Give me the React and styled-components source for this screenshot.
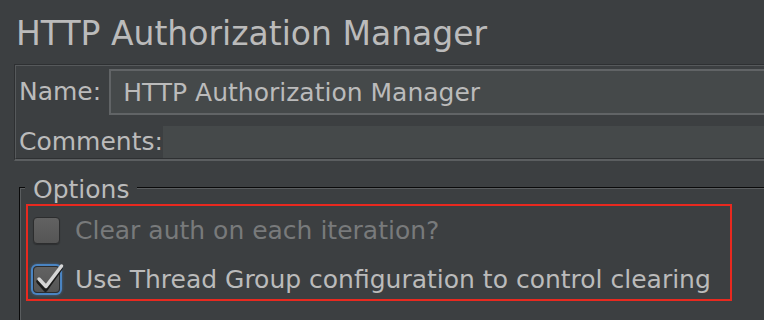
import React from "react";
import styled, { createGlobalStyle } from "styled-components";

const GlobalStyle = createGlobalStyle`
  html, body {
    margin: 0;
    padding: 0;
    background: #3c3f41;
    overflow: hidden;
  }
  body {
    font-family: "DejaVu Sans", "Liberation Sans", sans-serif;
    color: #bbbbbb;
  }
`;

const Page = styled.div`
  width: 764px;
  height: 320px;
  overflow: hidden;
`;

const Title = styled.h1`
  margin: 15px 0 0 16px;
  font-size: 33px;
  font-weight: normal;
  line-height: 38px;
  color: #bbbbbb;
  white-space: nowrap;
`;

const NamePanel = styled.div`
  margin: 11px -40px 0 14px;
  border-top: 1px solid #2e3032;
  border-left: 1px solid #2e3032;
  border-bottom: 2px solid #5b5e60;
`;

const PanelInner = styled.div`
  border-top: 1px solid #56595b;
  border-left: 1px solid #56595b;
  border-bottom: 1px solid #2e3032;
  padding: 3px 0 0 3px;
  display: flex;
  flex-direction: column;
  gap: 11px;
`;

const Row = styled.div`
  display: flex;
  align-items: center;
  height: ${(p) => p.$h}px;
`;

const Label = styled.span`
  font-size: 25px;
  line-height: 30px;
  color: #bbbbbb;
  white-space: nowrap;
  margin-right: ${(p) => p.$gap || 0}px;
`;

const TextField = styled.div`
  flex: 1;
  height: 100%;
  box-sizing: border-box;
  border: 2px solid #616466;
  background: #45494a;
  display: flex;
  align-items: center;
  padding-left: 12px;
  font-size: 25px;
  color: #bbbbbb;
  white-space: nowrap;
`;

const CommentField = styled.div`
  flex: 1;
  align-self: stretch;
  background: #45494a;
`;

const Options = styled.fieldset`
  margin: 10px -60px 0 19px;
  padding: 0 0 30px 4px;
  border: 2px groove #5a5d5f;
  border-right: none;
  border-bottom: none;
`;

const Legend = styled.legend`
  padding: 4px 8px 0;
  font-size: 25px;
  line-height: 29px;
  color: #bbbbbb;
`;

const Highlight = styled.div`
  margin-left: 1px;
  width: 706px;
  height: 97px;
  box-sizing: border-box;
  border: 2px solid #e8291f;
  padding: 10px 0 0 5px;
  display: flex;
  flex-direction: column;
  gap: 21px;
`;

const CheckRow = styled.label`
  display: flex;
  align-items: center;
  height: 28px;
  gap: 15px;
`;

const Box = styled.span`
  position: relative;
  flex: none;
  width: 27px;
  height: 27px;
  box-sizing: border-box;
  border-radius: 4px;
  border: 1px solid #2c2d2e;
  background: linear-gradient(#626262, #555555);
  box-shadow: ${(p) =>
    p.$focused
      ? "0 0 0 2px #4a84c2, 0 0 3px 2px rgba(74, 132, 194, 0.6)"
      : "0 1px 1px rgba(0, 0, 0, 0.25)"};
`;

const CheckMark = styled.svg`
  position: absolute;
  left: -1px;
  top: -6px;
  overflow: visible;
`;

const CheckText = styled.span`
  font-size: 25px;
  line-height: 28px;
  padding-top: 1px;
  white-space: nowrap;
  color: ${(p) => (p.$disabled ? "#787a7b" : "#bbbbbb")};
`;

const Check = () => (
  <CheckMark width="32" height="32" viewBox="0 0 32 32">
    <path
      d="M6 19 L13 27 L28 6"
      fill="none"
      stroke="#1b1b1b"
      strokeWidth="4.5"
      strokeLinecap="round"
      strokeLinejoin="round"
      transform="translate(-0.5 1.5)"
    />
    <path
      d="M6 18 L13 25.5 L28.5 5"
      fill="none"
      stroke="#d6d6d6"
      strokeWidth="3.5"
      strokeLinecap="round"
      strokeLinejoin="round"
    />
  </CheckMark>
);

export default function App() {
  return (
    <Page>
      <GlobalStyle />
      <Title>HTTP Authorization Manager</Title>
      <NamePanel>
        <PanelInner>
          <Row $h={46}>
            <Label $gap={8}>Name:</Label>
            <TextField>HTTP Authorization Manager</TextField>
          </Row>
          <Row $h={32}>
            <Label>Comments:</Label>
            <CommentField />
          </Row>
        </PanelInner>
      </NamePanel>
      <Options>
        <Legend>Options</Legend>
        <Highlight>
          <CheckRow>
            <Box />
            <CheckText $disabled>Clear auth on each iteration?</CheckText>
          </CheckRow>
          <CheckRow>
            <Box $focused>
              <Check />
            </Box>
            <CheckText>Use Thread Group configuration to control clearing</CheckText>
          </CheckRow>
        </Highlight>
      </Options>
    </Page>
  );
}
